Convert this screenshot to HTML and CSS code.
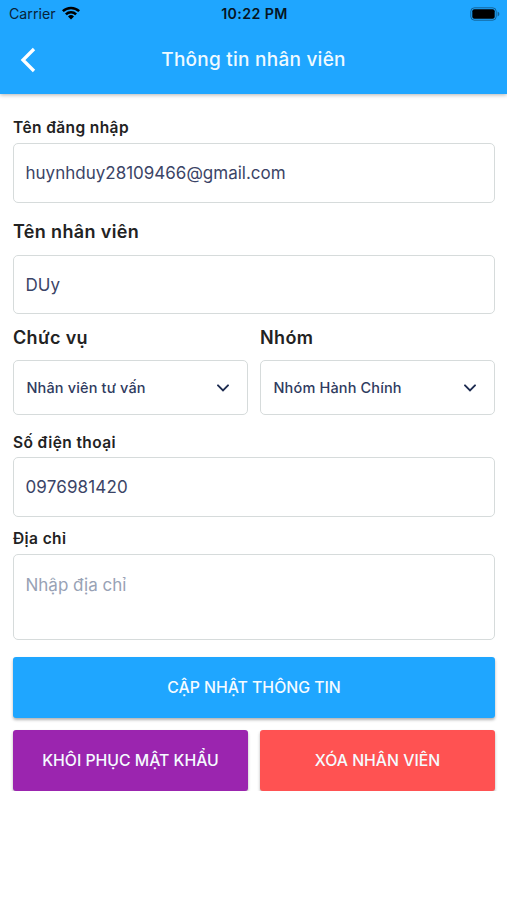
FILE: index.html
```html
<!DOCTYPE html>
<html lang="vi">
<head>
<meta charset="utf-8">
<title>Thông tin nhân viên</title>
<link rel="stylesheet" href="styles.css">
</head>
<body>
<header class="header">
  <div class="status">
    <div class="carrier"><span>Carrier</span>
      <svg width="18" height="14" viewBox="0 0 18 14"><path d="M0 4.3a13 13 0 0 1 18 0l-1.7 1.8a10.5 10.5 0 0 0-14.6 0zM3 7.4a8.7 8.7 0 0 1 12 0l-1.8 1.8a6.1 6.1 0 0 0-8.4 0zM6 10.5a4.4 4.4 0 0 1 6 0l-3 3z"/></svg>
    </div>
    <div class="clock">10:22 PM</div>
    <svg class="battery" width="30" height="14" viewBox="0 0 30 14"><rect x=".8" y=".8" width="25.4" height="12.4" rx="3.6" fill="none" stroke="#000" stroke-opacity=".4"/><rect x="2.3" y="2.3" width="22.4" height="9.4" rx="2"/><path d="M27.6 4.6q1.8.7 1.8 2.4t-1.8 2.4z" fill-opacity=".4"/></svg>
  </div>
  <div class="navbar">
    <svg class="back" width="16" height="26" viewBox="0 0 16 26"><path d="M14 2 3 13l11 11" fill="none" stroke="#fff" stroke-width="3.3"/></svg>
    <h1 class="title">Thông tin nhân viên</h1>
  </div>
</header>
<main class="form">
  <label class="label label-login" for="login"><span>Tên đăng nhập</span></label>
  <input class="field" id="login" value="huynhduy28109466@gmail.com">
  <label class="label label-large label-name" for="name"><span>Tên nhân viên</span></label>
  <input class="field name" id="name" value="DUy">
  <div class="columns">
    <div class="column">
      <div class="label label-large label-select"><span>Chức vụ</span></div>
      <div class="select"><span class="role">Nhân viên tư vấn</span><svg width="12" height="8" viewBox="0 0 12 8"><path d="m1 1.3 5 5 5-5"/></svg></div>
    </div>
    <div class="column">
      <div class="label label-large label-select"><span>Nhóm</span></div>
      <div class="select"><span class="group">Nhóm Hành Chính</span><svg width="12" height="8" viewBox="0 0 12 8"><path d="m1 1.3 5 5 5-5"/></svg></div>
    </div>
  </div>
  <label class="label label-phone" for="phone"><span>Số điện thoại</span></label>
  <input class="field phone" id="phone" value="0976981420">
  <label class="label label-address" for="address"><span>Địa chỉ</span></label>
  <textarea class="field address" id="address" placeholder="Nhập địa chỉ"></textarea>
  <button class="button update" type="button">CẬP NHẬT THÔNG TIN</button>
  <div class="columns">
    <button class="button reset" type="button">KHÔI PHỤC MẬT KHẨU</button>
    <button class="button delete" type="button">XÓA NHÂN VIÊN</button>
  </div>
</main>
</body>
</html>
```
FILE: styles.css
```css
* { box-sizing: border-box; }
body {
  margin: 0;
  background: #fff;
  font-family: Inter, "Noto Sans", sans-serif;
  color: #222;
}
.header {
  height: 94px;
  background: #1fa6ff;
  box-shadow: 0 1px 4px rgba(0, 0, 0, .3);
}
.status {
  display: grid;
  grid-template-columns: 1fr auto 1fr;
  align-items: center;
  height: 27px;
  padding: 0 7px 0 9px;
  color: #082338;
}
.carrier { display: flex; align-items: center; gap: 6px; font-size: 14.2px; }
.carrier svg { fill: #000; margin-top: -2px; }
.clock { font-size: 14.2px; font-weight: 600; letter-spacing: .4px; color: #061523; }
.battery { justify-self: end; }
.navbar {
  display: grid;
  grid-template-columns: 36px 1fr 36px;
  align-items: center;
  height: 66px;
}
.back { margin-left: 20px; }
.title {
  margin: 0;
  text-align: center;
  color: #effaff;
  font-size: 19px;
  line-height: 24px;
  font-weight: 500;
  letter-spacing: .25px;
}
.form { display: flex; flex-direction: column; padding: 18px 12px 0 13px; }
.label {
  display: flex;
  align-items: center;
  height: 31px;
  font-size: 15.5px;
  font-weight: 600;
  letter-spacing: .4px;
  white-space: nowrap;
}
.label-large { font-size: 18px; letter-spacing: .35px; }
.label-name { height: 52px; padding-top: 4px; }
.label-select { height: 46px; }
.label-phone { height: 42px; padding-top: 12px; }
.label-address { height: 37px; padding-top: 6px; }
.field {
  display: block;
  width: 100%;
  height: 60px;
  margin: 0;
  padding: 0 11.5px;
  border: 1px solid #d6dbdb;
  border-radius: 5px;
  outline: 0;
  background: #fff;
  color: #3b4466;
  font: 400 17px/22px Inter, "Noto Sans", sans-serif;
}
.name { height: 59px; }
.phone { letter-spacing: .15px; }
.address { height: 86px; padding-top: 19px; resize: none; overflow: hidden; }
.address::placeholder { color: #98a2b5; opacity: 1; }
.columns { display: grid; grid-template-columns: 1fr 1fr; gap: 12px; }
.select {
  display: flex;
  align-items: center;
  justify-content: space-between;
  height: 55px;
  padding: 0 18px 0 12.5px;
  border: 1px solid #d6dbdb;
  border-radius: 5px;
  color: #2f3b60;
  font-size: 14.5px;
  font-weight: 550;
  letter-spacing: .15px;
  white-space: nowrap;
}
.select svg { fill: none; stroke: #1d2b50; stroke-width: 1.9; stroke-linecap: round; }
.button {
  height: 61px;
  padding: 0;
  border: 0;
  border-radius: 3px;
  box-shadow: 0 2px 3px rgba(0, 0, 0, .3);
  color: #f5fbff;
  font: 500 15.8px/22px Inter, "Noto Sans", sans-serif;
  white-space: nowrap;
}
.update { margin: 17px 0 12px; background: #1fa6ff; }
.reset { background: #9b25af; }
.delete { background: #ff5252; }
```
